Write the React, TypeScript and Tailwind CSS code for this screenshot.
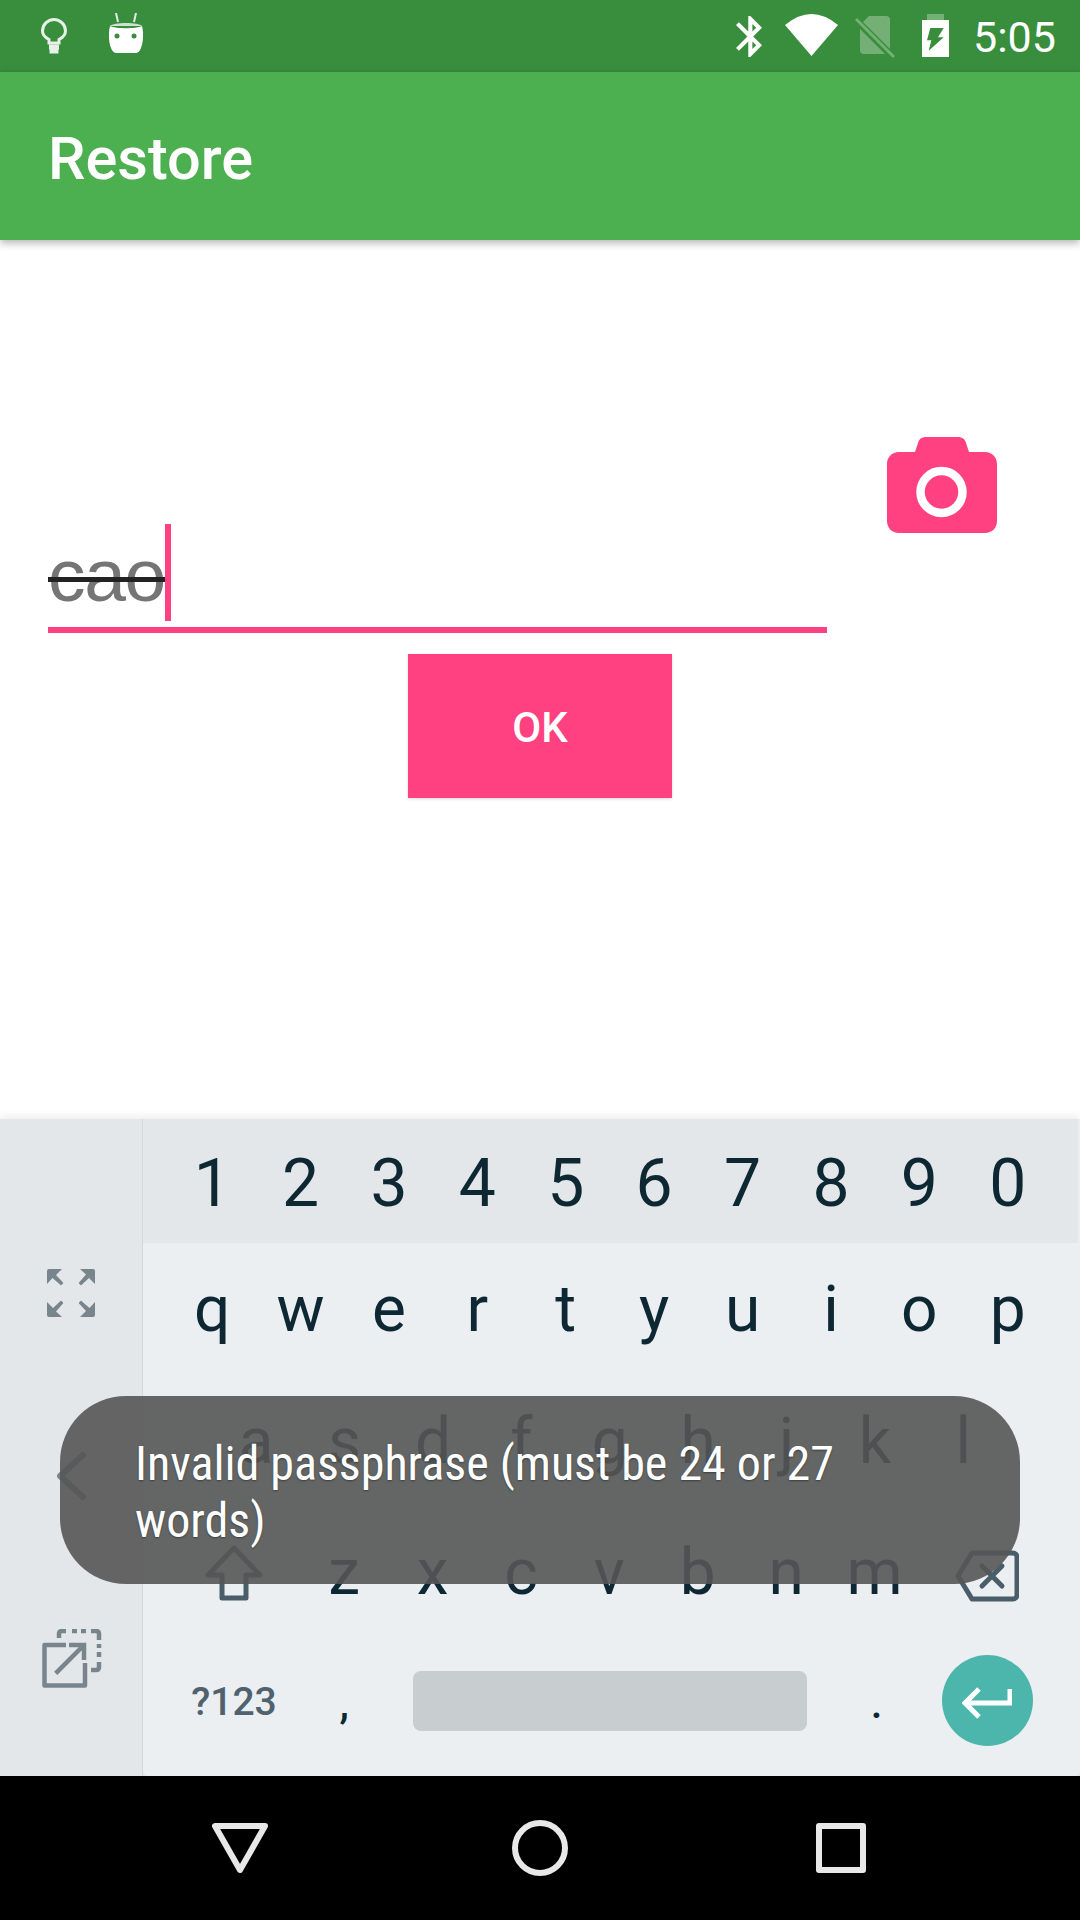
const numbers = ['1', '2', '3', '4', '5', '6', '7', '8', '9', '0']
const topRow = ['q', 'w', 'e', 'r', 't', 'y', 'u', 'i', 'o', 'p']
const middleRow = ['a', 's', 'd', 'f', 'g', 'h', 'j', 'k', 'l']
const bottomRow = ['z', 'x', 'c', 'v', 'b', 'n', 'm']

function Key({ label }: { label: string }) {
  return <span className="flex h-full w-[88.4px] shrink-0 items-center justify-center">{label}</span>
}

function StatusBar() {
  return (
    <div className="flex h-[72px] shrink-0 items-start bg-[#388E3C]">
      {/* bulb */}
      <svg className="ml-[41px] mt-[18px]" width="26" height="37" viewBox="0 0 26 37" fill="none" stroke="#fff" strokeOpacity="0.88" strokeWidth="3">
        <path d="M8 25v-3.500C4 19.400 1.500 16.600 1.500 13a11.500 11.500 0 0 1 23 0c0 3.600-2.500 6.400-6.500 8.500V25z" />
        <path d="M8 29h10M8.500 33h9" strokeWidth="5" />
      </svg>
      {/* android */}
      <svg className="ml-[42px] mt-[13px]" width="34" height="40" viewBox="0 0 34 40">
        <path d="M7 0l2 9M27 0l-2 9" stroke="#fff" strokeOpacity="0.85" strokeWidth="2" />
        <path d="M1 13c3-4 29-4 32 0z" fill="#fff" fillOpacity="0.75" />
        <path d="M1 13c6 3 26 3 32 0 2 8 1 17-1 22-1 3-3 5-6 5H8c-3 0-5-2-6-5-2-5-3-14-1-22z" fill="#fff" />
        <circle cx="8" cy="23" r="2.500" fill="#388E3C" />
        <circle cx="25" cy="23" r="2.500" fill="#388E3C" />
      </svg>
      <div className="ml-auto flex items-start">
        {/* bluetooth */}
        <svg className="mt-[15px]" width="26" height="43" viewBox="5 2 12.710 20" fill="#fff">
          <path d="M17.710 7.710L12 2h-1v7.590L6.410 5 5 6.410 10.590 12 5 17.590 6.410 19 11 14.410V22h1l5.710-5.710-4.300-4.290 4.300-4.290zM13 5.830l1.880 1.880L13 9.590V5.830zm1.880 10.460L13 18.170v-3.760l1.880 1.880z" />
        </svg>
        {/* wifi */}
        <svg className="ml-[23px] mt-[14px]" width="53" height="42" viewBox="0 0 53 42" fill="#fff">
          <path d="M0 11Q26.500-11 53 11L26.500 42z" />
        </svg>
        {/* no sim */}
        <svg className="ml-[17px] mt-[15px]" width="40" height="43" viewBox="0 0 40 43">
          <path d="M14 1h17a4 4 0 0 1 4 4v30a4 4 0 0 1-4 4H9a4 4 0 0 1-4-4V10z" fill="#fff" fillOpacity="0.3" />
          <path d="M-2 2l42 42" stroke="#388E3C" strokeWidth="7" />
          <path d="M1 4l38 38" stroke="#fff" strokeOpacity="0.3" strokeWidth="3" />
        </svg>
        {/* battery */}
        <svg className="ml-[26px] mt-[14px]" width="29" height="43" viewBox="0 0 29 43">
          <path d="M6 0h17v6H6z" fill="#fff" fillOpacity="0.3" />
          <path d="M1 6h27v37H1z" fill="#fff" />
          <path d="M9.300 14h13.400L17 23.300h5.700L7.700 36.700l2.600-10.400H6z" fill="#388E3C" />
        </svg>
        <span className="ml-[23px] mr-[27px] w-[80px] text-center text-[43px] leading-[74px] text-white">5:05</span>
      </div>
    </div>
  )
}

function CameraIcon() {
  return (
    <svg className="ml-[60px] shrink-0 self-start" width="110" height="96" viewBox="0 0 110 96">
      <path d="M28 15l3-9c1-4 4-6 8-6h32c4 0 7 2 8 6l3 9h16c7 0 12 5 12 12v57c0 7-5 12-12 12H12C5 96 0 91 0 84V27c0-7 5-12 12-12z" fill="#FF4081" />
      <circle cx="54.500" cy="55" r="21" fill="none" stroke="#fff" strokeWidth="8.500" />
    </svg>
  )
}

function Keyboard() {
  return (
    <div className="flex h-[657px] shrink-0 bg-[#E3E7EA] shadow-[0_-3px_8px_rgba(0,0,0,0.07)]">
      <div className="flex w-[143px] shrink-0 flex-col items-center border-r border-[#D3D8DB]">
        <svg className="mt-[150px]" width="48" height="48" viewBox="0 0 48 48" fill="#78858D">
          {[0, 90, 180, 270].map((angle) => (
            <g key={angle} transform={`rotate(${angle} 24 24)`}>
              <path d="M2 0h13L9 6l7 7.500q.5 1-.5 1.500l-1 1q-1 .5-1.500-.5L5.500 9 0 15V2a2 2 0 0 1 2-2z" />
            </g>
          ))}
        </svg>
        {/* back chevron, sits under the toast */}
        <svg className="mt-[135px]" width="29" height="48" viewBox="0 0 29 48" fill="none" stroke="#78858D" strokeWidth="6" strokeLinecap="round" strokeLinejoin="round">
          <path d="M26 3L3 24l23 21" />
        </svg>
        <svg className="ml-[2px] mt-[129px]" width="60" height="60" viewBox="0 0 60 60" fill="none" stroke="#78858D" strokeWidth="4.500">
          <path d="M24 16H2.500v40.500H43V34" strokeLinejoin="round" />
          <path d="M13.700 44.300L40 18M27 16h15v15" />
          <path d="M17 9V5q0-3 3-3h4M30 2h5M39 2h5M49 2h5q3 0 3 3v6M57 15v4M57 23v5M57 33v5q0 3-3 3h-5" />
        </svg>
      </div>
      <div className="flex min-w-0 flex-1 flex-col rounded-bl-[6px] rounded-br-[6px] bg-[#EBEFF2] pr-[2px] text-[64px] text-[#0D2733]">
        <div className="flex h-[124px] items-center bg-[#E3E7EA] pl-[25px] pt-[5px] text-[66px]">
          {numbers.map((n) => (
            <Key key={n} label={n} />
          ))}
        </div>
        <div className="flex h-[133px] pl-[25px]">
          {topRow.map((k) => (
            <Key key={k} label={k} />
          ))}
        </div>
        <div className="flex h-[132px] pl-[69px]">
          {middleRow.map((k) => (
            <Key key={k} label={k} />
          ))}
        </div>
        <div className="flex h-[130px] items-start pl-[25px]">
          <div className="flex h-[130px] w-[132px] shrink-0 items-start justify-center pt-[37px]">
            <svg width="58" height="56" viewBox="0 0 58 56" fill="none" stroke="#4A5E69" strokeWidth="5" strokeLinejoin="round">
              <path d="M29 3L3 30h14v23h24V30h14z" />
            </svg>
          </div>
          {bottomRow.map((k) => (
            <Key key={k} label={k} />
          ))}
          <div className="ml-[36px] mt-[42px] shrink-0">
            <svg className="block" width="64" height="52" viewBox="0 0 64 52" fill="none" stroke="#4A5E69" strokeWidth="5" strokeLinejoin="round" strokeLinecap="round">
              <path d="M17 3h41a4 4 0 0 1 4 4v38a4 4 0 0 1-4 4H17L3 26z" />
              <path d="M27 16l20 20M47 16L27 36" />
            </svg>
          </div>
        </div>
        <div className="flex h-[138px] items-start pl-[25px]">
          <span className="flex h-[128px] w-[132px] shrink-0 items-center justify-center text-[39px] font-medium text-[#4F626D]">?123</span>
          <span className="flex h-[130px] w-[88.4px] shrink-0 items-center justify-center text-[42px] font-medium">,</span>
          <div className="ml-[25px] mt-[33px] h-[60px] w-[394px] shrink-0 rounded-[8px] bg-[#C8CDD0]" />
          <span className="ml-[25px] flex h-[130px] w-[88.4px] shrink-0 items-center justify-center text-[42px] font-medium">.</span>
          <div className="ml-[21px] mt-[17px] flex h-[91px] w-[91px] shrink-0 items-center justify-center rounded-full bg-[#4DB6AC] pt-[5px]">
            <svg width="50" height="32" viewBox="0 0 50 32" fill="none" stroke="#fff" strokeWidth="5">
              <path d="M48 2v14H4M17 2L3 16l14 14" />
            </svg>
          </div>
        </div>
      </div>
    </div>
  )
}

function NavBar() {
  return (
    <div className="relative flex h-[144px] shrink-0 items-start bg-black">
      <svg className="ml-[212px] mt-[47px]" width="56" height="50" viewBox="0 0 56 50" fill="none" stroke="#E8E8E8" strokeWidth="6" strokeLinejoin="round">
        <path d="M3 3h50L28 47z" />
      </svg>
      <div className="ml-[244px] mt-[44px] h-[56px] w-[56px] rounded-full border-[6px] border-[#E8E8E8]" />
      <div className="ml-[248px] mt-[47px] h-[50px] w-[50px] rounded-[3px] border-[6px] border-[#E8E8E8]" />
    </div>
  )
}

export default function App() {
  return (
    <div className="relative flex h-[1920px] w-[1080px] flex-col overflow-hidden bg-white" style={{ fontFamily: 'Roboto, sans-serif' }}>
      <StatusBar />
      <div className="z-10 flex h-[168px] shrink-0 items-center bg-[#4CAF50] pl-[48px] pt-[7px] shadow-[0_3px_8px_rgba(0,0,0,0.3)]">
        <h1 className="text-[59.500px] font-medium text-white">Restore</h1>
      </div>

      <main className="flex h-[879px] shrink-0 flex-col pt-[197px]">
        <div className="flex h-[196px] pl-[48px]">
          <div className="flex h-[109px] w-[779px] shrink-0 flex-col self-end">
            <div className="flex h-[103px] items-start">
              <span className="relative mt-[10px] text-[75px] leading-[82px] tracking-[-1.300px] text-[#757575]" style={{ fontFamily: '"Liberation Sans", sans-serif' }}>
                cao
                <span className="absolute left-0 right-0 top-[43px] h-[5px] bg-[#222]" />
              </span>
              <div className="h-[97px] w-[6px] bg-[#FF4081]" />
            </div>
            <div className="h-[6px] bg-[#FF4081]" />
          </div>
          <CameraIcon />
        </div>
        <div className="mt-[21px] flex justify-center">
          <button className="h-[144px] w-[264px] bg-[#FF4081] pt-[2px] text-[42px] font-medium text-white shadow-[0_1px_3px_rgba(0,0,0,0.15)]">OK</button>
        </div>
      </main>

      <Keyboard />
      <NavBar />

      {/* toast */}
      <div className="absolute left-[60px] top-[1396px] h-[188px] w-[960px] rounded-[66px] bg-[#555555]/90 pl-[75px] pt-[39px] text-[48px] leading-[57px] text-white [font-stretch:75%] [text-shadow:0_1px_2px_rgba(0,0,0,0.4)]">
        <p>Invalid passphrase (must be 24 or 27</p>
        <p>words)</p>
      </div>
    </div>
  )
}
